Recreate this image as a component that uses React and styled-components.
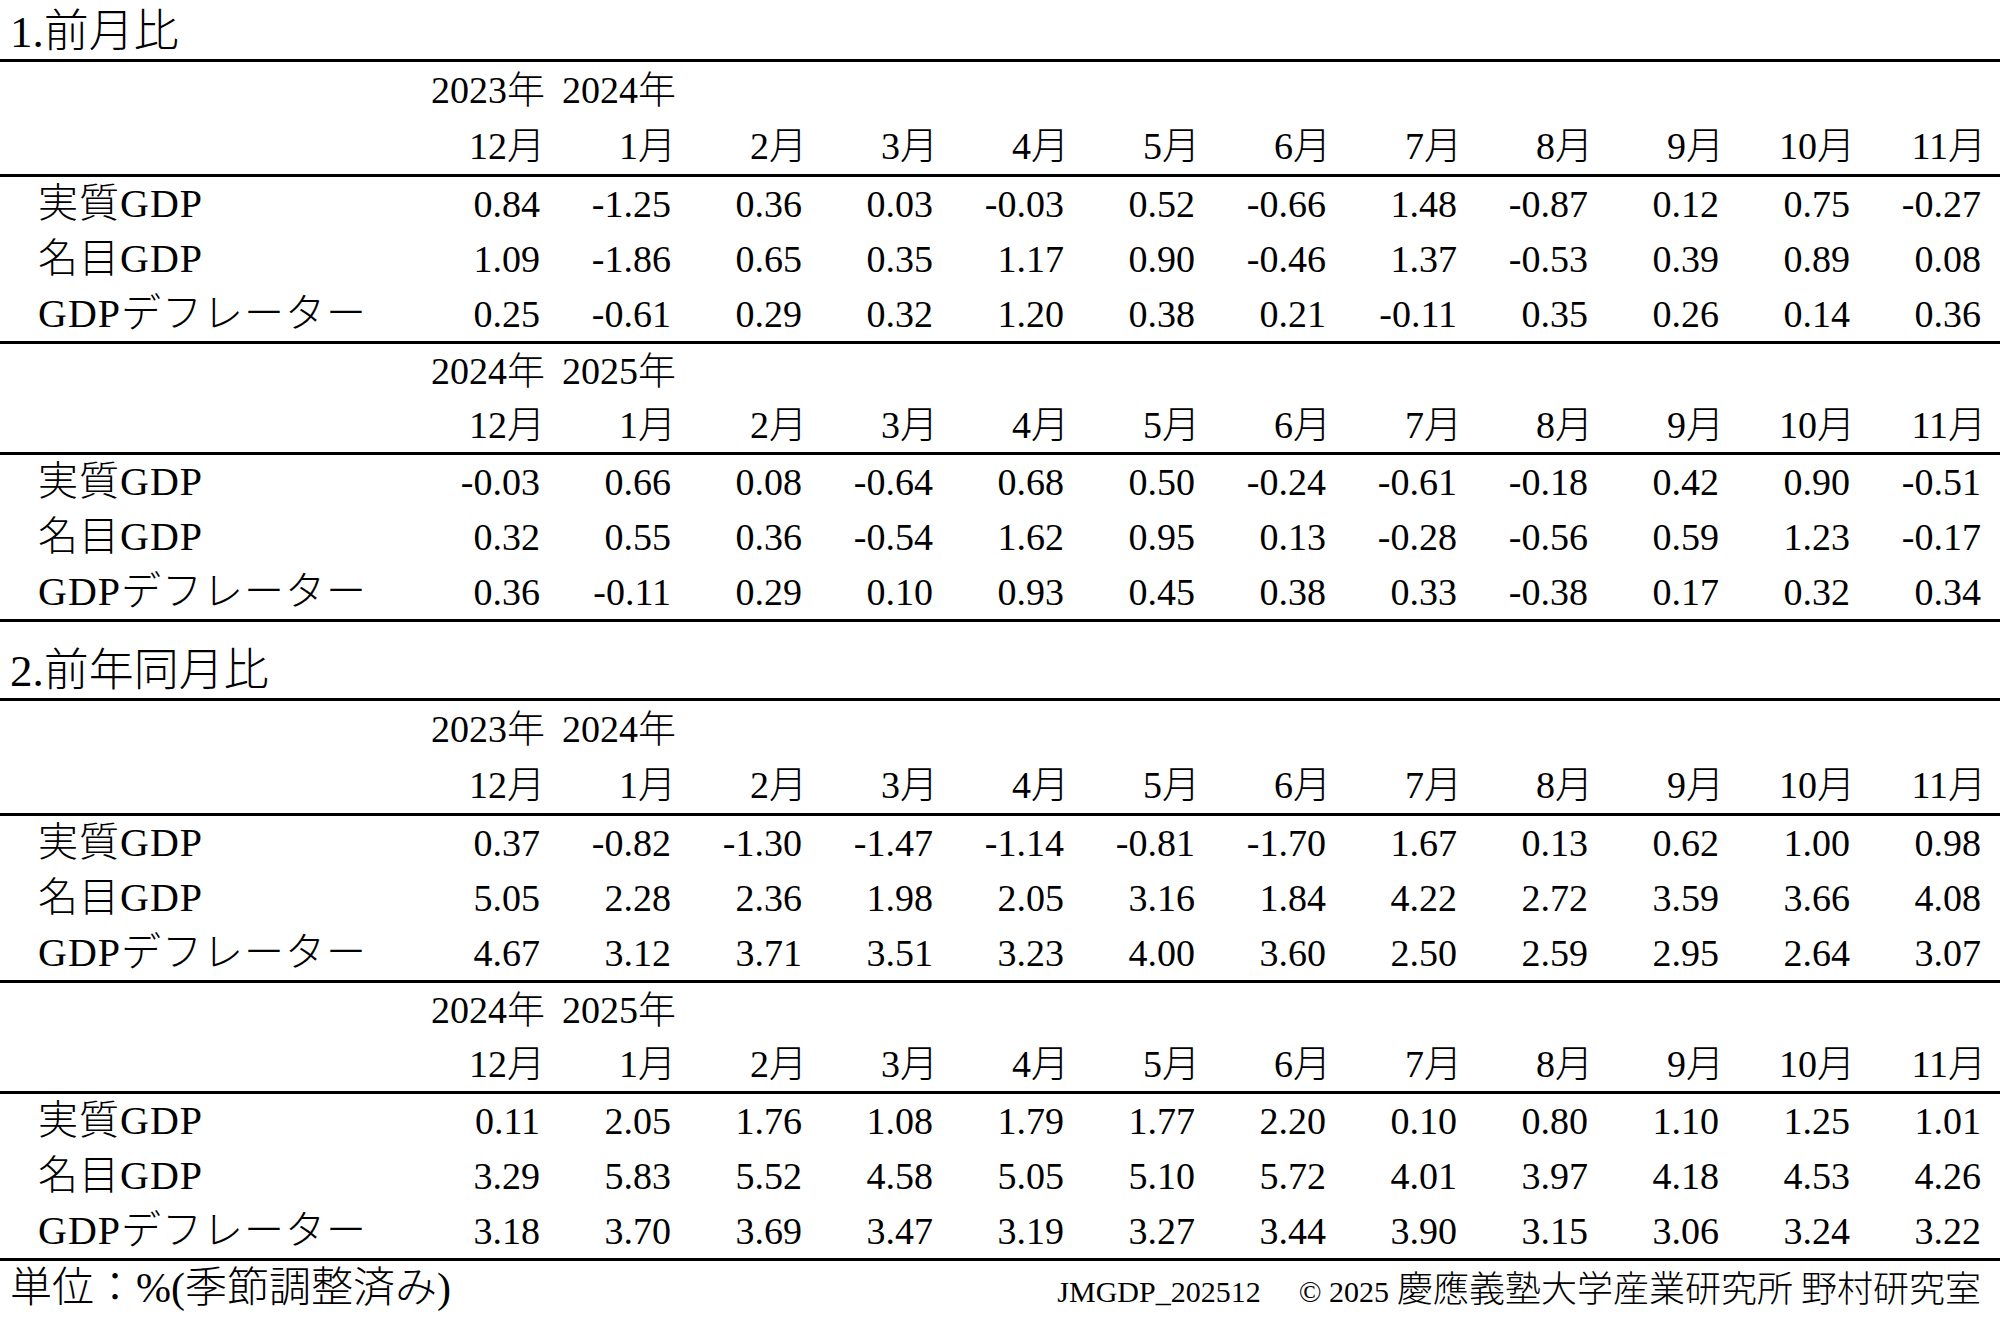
import React from 'react';
import styled, { createGlobalStyle } from 'styled-components';

const GlobalStyle = createGlobalStyle`
  html, body {
    margin: 0;
    padding: 0;
    background: #fff;
  }
  body {
    font-family: "Liberation Serif", "Noto Sans CJK JP", serif;
    font-weight: 300;
    color: #000;
  }
`;

const Page = styled.div`
  width: 2000px;
  height: 1317px;
  overflow: hidden;
  background: #fff;
`;

const SectionTitle = styled.div`
  display: flex;
  align-items: flex-end;
  height: ${p => p.$h - 4}px;
  padding: 0 0 4px 10px;
  border-bottom: 3px solid #000;
  font-size: 45px;
  line-height: 1;
`;

const Block = styled.div`
  border-bottom: 3px solid #000;
`;

const Row = styled.div`
  display: grid;
  grid-template-columns: 409px repeat(12, 131px);
  align-items: center;
  height: ${p => p.$h}px;
  line-height: 1;
`;

const Label = styled.div`
  padding-left: 38px;
  font-size: 40px;
  letter-spacing: 1px;
  white-space: nowrap;
`;

const Cell = styled.div`
  text-align: right;
  font-size: 38px;
  white-space: nowrap;
  margin-right: ${p => (p.$head ? -5 : 0)}px;
`;

const Footer = styled.div`
  display: flex;
  justify-content: space-between;
  align-items: center;
  height: 54px;
  padding: 0 19px 0 10px;
  line-height: 1;
`;

const Unit = styled.div`
  font-size: 42px;
`;

const Credit = styled.div`
  display: flex;
  align-items: baseline;
`;

const Code = styled.span`
  font-size: 30px;
  margin-right: 38px;
`;

const Copy = styled.span`
  font-size: 30px;
  margin-right: 8px;
`;

const Org = styled.span`
  font-size: 36px;
  font-family: "Noto Sans CJK JP", sans-serif;
  white-space: pre;
`;

const sections = [
  {
    title: '1.前月比',
    titleH: 59,
    blocks: [
      {
        years: ['2023年', '2024年'],
        headH: 56,
        rows: [
          ['実質GDP', '0.84 -1.25 0.36 0.03 -0.03 0.52 -0.66 1.48 -0.87 0.12 0.75 -0.27'],
          ['名目GDP', '1.09 -1.86 0.65 0.35 1.17 0.90 -0.46 1.37 -0.53 0.39 0.89 0.08'],
          ['GDPデフレーター', '0.25 -0.61 0.29 0.32 1.20 0.38 0.21 -0.11 0.35 0.26 0.14 0.36'],
        ],
      },
      {
        years: ['2024年', '2025年'],
        headH: 54,
        rows: [
          ['実質GDP', '-0.03 0.66 0.08 -0.64 0.68 0.50 -0.24 -0.61 -0.18 0.42 0.90 -0.51'],
          ['名目GDP', '0.32 0.55 0.36 -0.54 1.62 0.95 0.13 -0.28 -0.56 0.59 1.23 -0.17'],
          ['GDPデフレーター', '0.36 -0.11 0.29 0.10 0.93 0.45 0.38 0.33 -0.38 0.17 0.32 0.34'],
        ],
      },
    ],
  },
  {
    title: '2.前年同月比',
    titleH: 76,
    blocks: [
      {
        years: ['2023年', '2024年'],
        headH: 56,
        rows: [
          ['実質GDP', '0.37 -0.82 -1.30 -1.47 -1.14 -0.81 -1.70 1.67 0.13 0.62 1.00 0.98'],
          ['名目GDP', '5.05 2.28 2.36 1.98 2.05 3.16 1.84 4.22 2.72 3.59 3.66 4.08'],
          ['GDPデフレーター', '4.67 3.12 3.71 3.51 3.23 4.00 3.60 2.50 2.59 2.95 2.64 3.07'],
        ],
      },
      {
        years: ['2024年', '2025年'],
        headH: 54,
        rows: [
          ['実質GDP', '0.11 2.05 1.76 1.08 1.79 1.77 2.20 0.10 0.80 1.10 1.25 1.01'],
          ['名目GDP', '3.29 5.83 5.52 4.58 5.05 5.10 5.72 4.01 3.97 4.18 4.53 4.26'],
          ['GDPデフレーター', '3.18 3.70 3.69 3.47 3.19 3.27 3.44 3.90 3.15 3.06 3.24 3.22'],
        ],
      },
    ],
  },
];

const months = ['12月', '1月', '2月', '3月', '4月', '5月', '6月', '7月', '8月', '9月', '10月', '11月'];

const TableBlock = ({ block }) => (
  <>
    <Block>
      <Row $h={block.headH}>
        <Label />
        <Cell $head>{block.years[0]}</Cell>
        <Cell $head>{block.years[1]}</Cell>
      </Row>
      <Row $h={block.headH}>
        <Label />
        {months.map(m => (
          <Cell key={m} $head>
            {m}
          </Cell>
        ))}
      </Row>
    </Block>
    <Block>
      {block.rows.map(([name, vals]) => (
        <Row key={name} $h={164 / 3}>
          <Label>{name}</Label>
          {vals.split(' ').map((v, i) => (
            <Cell key={i}>{v}</Cell>
          ))}
        </Row>
      ))}
    </Block>
  </>
);

const App = () => (
  <Page>
    <GlobalStyle />
    {sections.map(s => (
      <section key={s.title}>
        <SectionTitle $h={s.titleH}>{s.title}</SectionTitle>
        {s.blocks.map((b, i) => (
          <TableBlock key={i} block={b} />
        ))}
      </section>
    ))}
    <Footer>
      <Unit>単位：%(季節調整済み)</Unit>
      <Credit>
        <Code>JMGDP_202512</Code>
        <Copy>© 2025</Copy>
        <Org>慶應義塾大学産業研究所 野村研究室</Org>
      </Credit>
    </Footer>
  </Page>
);

export default App;
